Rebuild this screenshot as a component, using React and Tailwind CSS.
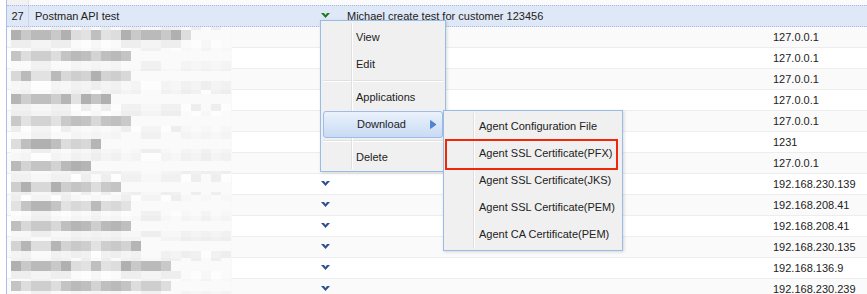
import React from "react";

const FONT = { fontFamily: '"Liberation Sans", Arial, sans-serif' };

// pixelated (blurred) name cells
const grayWidths = [18, 12, 12, 10, 12, 9, 8, 11, 12, 12, 13, 16, 16, 13];
const grayOffsets = [3, 3, 2, 4, 5, 7, 8, 8, 6, 5, 4, 3, 2];
const ips = [
  "127.0.0.1",
  "127.0.0.1",
  "127.0.0.1",
  "127.0.0.1",
  "127.0.0.1",
  "1231",
  "127.0.0.1",
  "192.168.230.139",
  "192.168.208.41",
  "192.168.208.41",
  "192.168.230.135",
  "192.168.136.9",
  "192.168.230.239",
];

const shade = (row, col, dark) => {
  const n = (row * 37 + col * 53 + col * col * 7) % 11;
  if (dark) {
    const v = 176 + n * 5;
    return `rgb(${v},${v},${v})`;
  }
  const v = 238 + (n % 6) * 3;
  return `rgb(${v},${v},${v})`;
};

const Chevron = ({ color = "#2d4f8e" }) => (
  <svg width="9" height="6" viewBox="0 0 9 6">
    <path d="M0 0h3l1.5 2L6 0h3L4.5 5z" fill={color} />
  </svg>
);

const Blur = ({ row }) => {
  const w = grayWidths[row];
  const off = grayOffsets[row];
  return (
    <div className="flex h-[21px] w-[221px] flex-col overflow-hidden bg-[#f8f8f8]">
      <div className="flex shrink-0" style={{ height: off }}>
        {Array.from({ length: 22 }).map((_, j) => (
          <div key={j} className="h-full w-[10px]" style={{ background: shade(row + 3, j, false) }} />
        ))}
      </div>
      <div className="flex h-[10px] shrink-0">
        {Array.from({ length: 22 }).map((_, j) => (
          <div
            key={j}
            className="h-full w-[10px]"
            style={{ background: j < w ? shade(row, j, true) : "#fafafa" }}
          />
        ))}
      </div>
      <div className="flex flex-1">
        {Array.from({ length: 22 }).map((_, j) => (
          <div key={j} className="h-full w-[10px]" style={{ background: shade(row + 7, j, false) }} />
        ))}
      </div>
    </div>
  );
};

const MenuItem = ({ children, active, arrow }) => (
  <div
    className={`relative mx-[2px] flex h-[27px] items-center pl-[33px] ${
      active
        ? "rounded-[3px] border border-[#a3bae9] bg-gradient-to-b from-[#ebf2fc] to-[#c8dbf4] pl-[32px]"
        : ""
    }`}
  >
    <span>{children}</span>
    {arrow && (
      <svg className="absolute right-[5px] top-[8px]" width="7" height="9" viewBox="0 0 7 9">
        <path d="M0.5 0.5L6 4.5L0.5 8.5z" fill="#4a86d8" stroke="#2f68bb" strokeWidth="0.6" />
      </svg>
    )}
  </div>
);

const Sep = () => (
  <div className="mx-[2px] flex h-[6px] flex-col justify-center">
    <div className="h-px bg-[#e0e0e0]" />
    <div className="h-px bg-white" />
  </div>
);

export default function App() {
  return (
    <div
      className="relative h-[294px] w-[867px] overflow-hidden bg-white text-[11px] text-[#222]"
      style={FONT}
    >
      <div className="ml-[6px] border-l border-[#a9c1e8]">
        {/* partial top row */}
        <div className="flex h-[5px] bg-[#fafafa]">
          <div className="w-[22px] border-r border-[#e4e4e4] bg-[#f2f2f2]" />
        </div>
        {/* selected row */}
        <div className="flex h-[22px] border-y border-dotted border-[#a3bae9] bg-[#dfe8f6]">
          <div className="flex w-[22px] items-center justify-center border-r border-[#c8d6ee]">27</div>
          <div className="flex w-[272px] items-center pl-[6px]">Postman API test</div>
          <div className="flex w-[40px] items-start pl-[20px] pt-[7px]">
            <Chevron color="#1f7a1f" />
          </div>
          <div className="flex w-[427px] items-center pl-[6px]">Michael create test for customer 123456</div>
          <div className="flex-1" />
        </div>
        {ips.map((ip, i) => (
          <div
            key={i}
            className={`flex h-[21px] border-b border-[#ededed] ${i % 2 === 0 ? "bg-[#fafafa]" : "bg-white"}`}
          >
            <div className="w-[294px] pl-[4px]">
              <Blur row={i} />
            </div>
            <div className="flex w-[40px] items-center pl-[20px]">
              <Chevron />
            </div>
            <div className="w-[427px]" />
            <div className="flex flex-1 items-center pl-[5px]">{ip}</div>
          </div>
        ))}
      </div>

      {/* context menu */}
      <div className="absolute left-[320px] top-[20px] h-[152px] w-[126px] border border-[#99bbe8] bg-[#f0f0f0] pt-[3px] shadow-[1px_1px_3px_rgba(0,0,0,0.15)]">
        <div className="absolute bottom-[2px] left-[30px] top-[2px] w-px bg-[#e0e0e0]" />
        <div className="absolute bottom-[2px] left-[31px] top-[2px] w-px bg-white" />
        <MenuItem>View</MenuItem>
        <MenuItem>Edit</MenuItem>
        <Sep />
        <MenuItem>Applications</MenuItem>
        <MenuItem active arrow>
          Download
        </MenuItem>
        <Sep />
        <MenuItem>Delete</MenuItem>
      </div>

      {/* submenu */}
      <div className="absolute left-[443px] top-[110px] h-[141px] w-[180px] border border-[#99bbe8] bg-[#f0f0f0] pt-[2px] shadow-[1px_1px_3px_rgba(0,0,0,0.15)]">
        <div className="absolute bottom-[2px] left-[29px] top-[2px] w-px bg-[#e0e0e0]" />
        <div className="absolute bottom-[2px] left-[30px] top-[2px] w-px bg-white" />
        <MenuItem>Agent Configuration File</MenuItem>
        <MenuItem>Agent SSL Certificate(PFX)</MenuItem>
        <MenuItem>Agent SSL Certificate(JKS)</MenuItem>
        <MenuItem>Agent SSL Certificate(PEM)</MenuItem>
        <MenuItem>Agent CA Certificate(PEM)</MenuItem>
        <div className="absolute left-[1px] top-[28px] h-[31px] w-[173px] border-2 border-[#f0280a]" />
      </div>
    </div>
  );
}
